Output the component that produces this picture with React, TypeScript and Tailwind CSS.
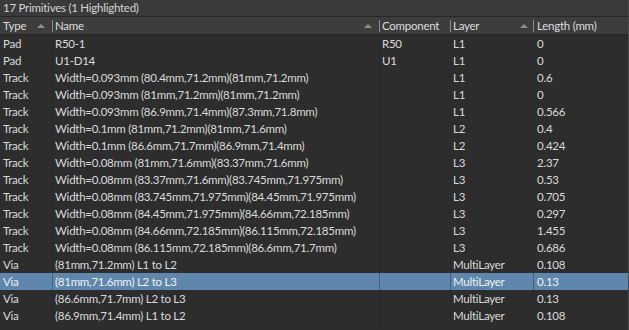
type Row = { type: string; name: string; comp: string; layer: string; len: string; hi?: boolean };

const rows: Row[] = [
    { type: 'Pad', name: 'R50-1', comp: 'R50', layer: 'L1', len: '0' },
    { type: 'Pad', name: 'U1-D14', comp: 'U1', layer: 'L1', len: '0' },
    { type: 'Track', name: 'Width=0.093mm (80.4mm,71.2mm)(81mm,71.2mm)', comp: '', layer: 'L1', len: '0.6' },
    { type: 'Track', name: 'Width=0.093mm (81mm,71.2mm)(81mm,71.2mm)', comp: '', layer: 'L1', len: '0' },
    { type: 'Track', name: 'Width=0.093mm (86.9mm,71.4mm)(87.3mm,71.8mm)', comp: '', layer: 'L1', len: '0.566' },
    { type: 'Track', name: 'Width=0.1mm (81mm,71.2mm)(81mm,71.6mm)', comp: '', layer: 'L2', len: '0.4' },
    { type: 'Track', name: 'Width=0.1mm (86.6mm,71.7mm)(86.9mm,71.4mm)', comp: '', layer: 'L2', len: '0.424' },
    { type: 'Track', name: 'Width=0.08mm (81mm,71.6mm)(83.37mm,71.6mm)', comp: '', layer: 'L3', len: '2.37' },
    { type: 'Track', name: 'Width=0.08mm (83.37mm,71.6mm)(83.745mm,71.975mm)', comp: '', layer: 'L3', len: '0.53' },
    { type: 'Track', name: 'Width=0.08mm (83.745mm,71.975mm)(84.45mm,71.975mm)', comp: '', layer: 'L3', len: '0.705' },
    { type: 'Track', name: 'Width=0.08mm (84.45mm,71.975mm)(84.66mm,72.185mm)', comp: '', layer: 'L3', len: '0.297' },
    { type: 'Track', name: 'Width=0.08mm (84.66mm,72.185mm)(86.115mm,72.185mm)', comp: '', layer: 'L3', len: '1.455' },
    { type: 'Track', name: 'Width=0.08mm (86.115mm,72.185mm)(86.6mm,71.7mm)', comp: '', layer: 'L3', len: '0.686' },
    { type: 'Via', name: '(81mm,71.2mm) L1 to L2', comp: '', layer: 'MultiLayer', len: '0.108' },
    { type: 'Via', name: '(81mm,71.6mm) L2 to L3', comp: '', layer: 'MultiLayer', len: '0.13', hi: true },
    { type: 'Via', name: '(86.6mm,71.7mm) L2 to L3', comp: '', layer: 'MultiLayer', len: '0.13' },
    { type: 'Via', name: '(86.9mm,71.4mm) L1 to L2', comp: '', layer: 'MultiLayer', len: '0.108' },
];

// small filled sort triangle from the header
const Sort = () => (
    <svg width="8" height="5" viewBox="0 0 8 5" className="shrink-0">
        <path d="M0 5 L4 1 L8 5 Z" fill="#8c8c8c" />
    </svg>
);

export default function App() {
    const line = (hi?: boolean) => (hi ? 'border-[#44627f]' : 'border-[#292929]');
    return (
        <div className="w-[629px] h-[330px] bg-[#2d2d2d] text-[#dadada] text-[11.5px] tracking-[-0.25px] leading-none overflow-hidden border-r border-[#4a4a4a]" style={{ fontFamily: 'Lato, "Open Sans", sans-serif' }}>
            <div className="h-[17px] bg-[#3a3a3a] border-b border-[#262626] flex items-center px-[3px] text-[#d4d4d4]">
                17 Primitives (1 Highlighted)
            </div>
            <div className="h-[18px] bg-[#3d3d3d] border-b border-[#252525] flex items-center text-[#dcdcdc]">
                <div className="w-[52px] pl-[3px] pr-[7px] flex items-center justify-between">
                    <span>Type</span>
                    <Sort />
                </div>
                <div className="w-[327px] pl-[2px] pr-[7px] flex items-center justify-between border-l border-[#8a8a8a] h-[12px]">
                    <span>Name</span>
                    <Sort />
                </div>
                <div className="w-[71px] pl-[2px] flex items-center border-l border-[#8a8a8a] h-[12px]">
                    <span>Component</span>
                </div>
                <div className="w-[83px] pl-[2px] pr-[5px] flex items-center justify-between border-l border-[#8a8a8a] h-[12px]">
                    <span>Layer</span>
                    <Sort />
                </div>
                <div className="flex-1 pl-[3px] flex items-center border-l border-[#8a8a8a] h-[12px]">
                    <span>Length (mm)</span>
                </div>
            </div>
            {rows.map((r, i) => (
                <div key={i} className={`h-[17px] flex items-stretch ${r.hi ? 'bg-[#5f86ac] text-[#f0f0f0]' : ''}`}>
                    <div className={`w-[53px] pl-[3px] flex items-center border-r ${line(r.hi)}`}>{r.type}</div>
                    <div className={`w-[327px] pl-[2px] flex items-center whitespace-nowrap overflow-hidden border-r ${line(r.hi)}`}>{r.name}</div>
                    <div className={`w-[71px] pl-[2px] flex items-center border-r ${line(r.hi)}`}>{r.comp}</div>
                    <div className={`w-[83px] pl-[2px] flex items-center border-r ${line(r.hi)}`}>{r.layer}</div>
                    <div className="flex-1 pl-[3px] flex items-center">{r.len}</div>
                </div>
            ))}
        </div>
    );
}
